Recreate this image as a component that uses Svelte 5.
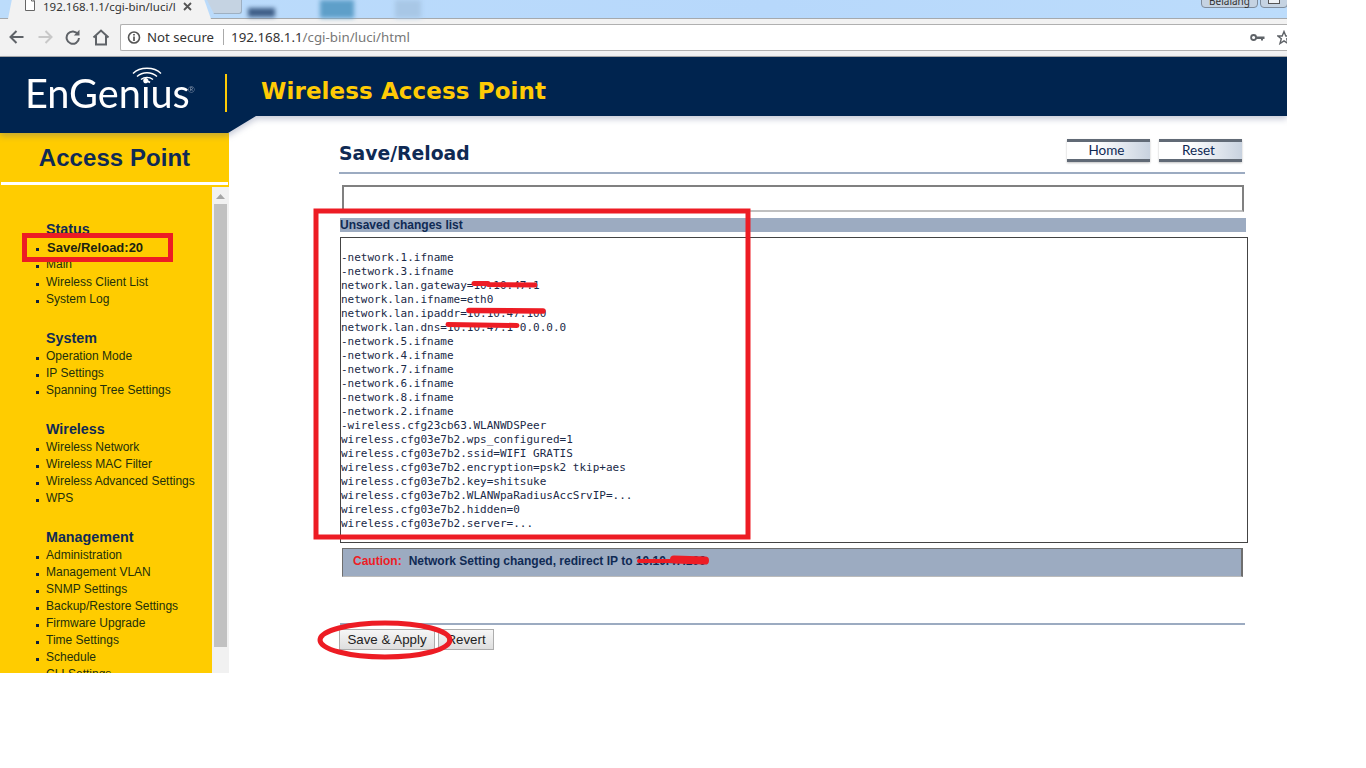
<script>
  const groups = [
    { title: 'Status', items: ['Save/Reload:20', 'Main', 'Wireless Client List', 'System Log'] },
    { title: 'System', items: ['Operation Mode', 'IP Settings', 'Spanning Tree Settings'] },
    { title: 'Wireless', items: ['Wireless Network', 'Wireless MAC Filter', 'Wireless Advanced Settings', 'WPS'] },
    { title: 'Management', items: ['Administration', 'Management VLAN', 'SNMP Settings', 'Backup/Restore Settings', 'Firmware Upgrade', 'Time Settings', 'Schedule', 'CLI Settings'] }
  ];
  const changes = [
    '-network.1.ifname', '-network.3.ifname', 'network.lan.gateway=10.10.47.1', 'network.lan.ifname=eth0',
    'network.lan.ipaddr=10.10.47.100', 'network.lan.dns=10.10.47.1 0.0.0.0', '-network.5.ifname', '-network.4.ifname',
    '-network.7.ifname', '-network.6.ifname', '-network.8.ifname', '-network.2.ifname', '-wireless.cfg23cb63.WLANWDSPeer',
    'wireless.cfg03e7b2.wps_configured=1', 'wireless.cfg03e7b2.ssid=WIFI GRATIS', 'wireless.cfg03e7b2.encryption=psk2 tkip+aes',
    'wireless.cfg03e7b2.key=shitsuke', 'wireless.cfg03e7b2.WLANWpaRadiusAccSrvIP=...', 'wireless.cfg03e7b2.hidden=0', 'wireless.cfg03e7b2.server=...'
  ];
</script>

<div class="page">
  <div class="tabstrip">
    <div class="tab2"></div>
    <div class="tab">
      <svg class="fileicon" width="12" height="14" viewBox="0 0 12 14"><path d="M1.5 0V12.5H10.5V3L7.5 0ZM7.5 0V3H10.5" fill="#fff" stroke="#666" stroke-width="1"/></svg>
      <span class="tabtitle">192.168.1.1/cgi-bin/luci/l</span>
      <svg class="tabclose" width="9" height="9" viewBox="0 0 9 9"><path d="M1 1L8 8M8 1L1 8" stroke="#555" stroke-width="1.8"/></svg>
    </div>
    <div class="blob blob1"></div>
    <div class="blob blob2"></div>
    <div class="blob blob3"></div>
    <div class="winbtn user">Belalang</div>
    <div class="winbtn mini"><i></i></div>
  </div>

  <div class="toolbar">
    <svg class="navicon" width="18" height="16" viewBox="0 0 18 16"><path d="M15.5 8H3M8.5 2L2.5 8L8.5 14" fill="none" stroke="#5f6368" stroke-width="2"/></svg>
    <svg class="navicon" width="18" height="16" viewBox="0 0 18 16"><path d="M2.5 8H15M9.5 2L15.5 8L9.5 14" fill="none" stroke="#c8c8c8" stroke-width="2"/></svg>
    <svg class="navicon" width="18" height="16" viewBox="0 0 18 16"><path d="M14 5.2A6.2 6.2 0 1 0 15 9" fill="none" stroke="#5f6368" stroke-width="2"/><path d="M15.5 0.8V6.6H9.8Z" fill="#5f6368"/></svg>
    <svg class="navicon" width="18" height="17" viewBox="0 0 18 17"><path d="M1.5 8.5L9 1.5L16.5 8.5M4 7V15.5H14V7" fill="none" stroke="#5f6368" stroke-width="2"/></svg>
    <div class="urlbox">
      <svg width="15" height="15" viewBox="0 0 15 15"><circle cx="7" cy="7.5" r="5.5" fill="none" stroke="#555" stroke-width="1.6"/><path d="M7 6.6V11M7 4V5.4" stroke="#555" stroke-width="1.7"/></svg>
      <span class="notsecure">Not secure</span>
      <span class="sep"></span>
      <span class="url">192.168.1.1<span class="urlpath">/cgi-bin/luci/html</span></span>
      <span class="grow"></span>
      <svg class="key" width="15" height="9" viewBox="0 0 15 9"><circle cx="3.6" cy="4.5" r="2.5" fill="none" stroke="#5f6368" stroke-width="1.8"/><path d="M6 3.6H14.5V6H13V7.5H11V6H6Z" fill="#5f6368"/></svg>
      <svg class="star" width="14" height="15" viewBox="0 0 14 15"><path d="M7 1.5L8.8 6H13.2L9.7 8.8L11 13.5L7 10.8L3 13.5L4.3 8.8L0.8 6H5.2Z" fill="none" stroke="#5f6368" stroke-width="1.4"/></svg>
    </div>
  </div>

  <div class="bannerwrap">
    <header class="banner">
      <div class="logo">
        <svg class="wifi" width="30" height="18" viewBox="0 0 30 18"><g fill="none" stroke="#fff"><path d="M1 6.5C8 -0.5 22 -0.5 29 6.5" stroke-width="1.4"/><path d="M5 9.5C10.5 4.5 19.5 4.5 25 9.5" stroke-width="1.4"/><path d="M9 12.5C12.5 9.6 17.5 9.6 21 12.5" stroke-width="1.4"/></g><path d="M12 15.5C14 14 16 14 18 15.5" fill="none" stroke="#fff" stroke-width="1.6"/></svg>
        <span class="wordmark">EnGenius</span><span class="reg">®</span>
      </div>
      <span class="bannerrule"></span>
      <span class="bannertitle">Wireless Access Point</span>
    </header>
  </div>

  <div class="content">
    <aside class="sidebar">
      <h2 class="sidetitle">Access Point</h2>
      <div class="siderule"></div>
      <div class="sideframe">
        <nav class="menu">
          {#each groups as g}
            <section class="group">
              <h3>{g.title}</h3>
              <ul>
                {#each g.items as item}
                  <li class:active={item.startsWith('Save')}>{item}</li>
                {/each}
              </ul>
            </section>
          {/each}
        </nav>
        <div class="scrollbar">
          <svg class="arrow" width="9" height="5" viewBox="0 0 9 5"><path d="M0 5L4.5 0L9 5Z" fill="#a6a6a6"/></svg>
          <div class="thumb"></div>
        </div>
      </div>
    </aside>

    <main class="main">
      <div class="titlerow">
        <h1>Save/Reload</h1>
        <div class="actions">
          <button class="nav">Home</button>
          <button class="nav">Reset</button>
        </div>
      </div>
      <div class="emptybox"></div>
      <div class="listhead">Unsaved changes list</div>
      <div class="listbox">
        {#each changes as line}
          <div class="line">{line}</div>
        {/each}
      </div>
      <div class="caution"><b class="cautionlabel">Caution:</b><b>Network Setting changed, redirect IP to 10.10.47.100</b></div>
      <div class="bottomrule"></div>
      <div class="formbtns">
        <button class="std save">Save &amp; Apply</button>
        <button class="std revert">Revert</button>
      </div>
    </main>
  </div>

  <svg class="marks" width="1287" height="768" viewBox="0 0 1287 768">
    <g fill="none" stroke="#ed1c24">
      <rect x="316" y="211" width="432" height="326" stroke-width="5"/>
      <rect x="24.500" y="235.500" width="146" height="24" stroke-width="5"/>
      <ellipse cx="385" cy="640" rx="65" ry="17" stroke-width="5"/>
      <g stroke-linecap="round">
        <path d="M474 283.500L488 283.500M488 284.500L535 285" stroke-width="5"/>
        <path d="M469 310.500L543 311" stroke-width="5.500"/>
        <path d="M448 324.500L517 325.500" stroke-width="5"/>
        <path d="M639 561L672 561" stroke-width="4"/>
        <path d="M674 559.500L705 560.500" stroke-width="8"/>
      </g>
    </g>
  </svg>
</div>

<style>
  :global(body) { margin: 0; background: #fff; overflow: hidden; }
  .page { position: relative; width: 1287px; height: 768px; overflow: hidden; font-family: "Liberation Sans", Arial, sans-serif; }
  .tabstrip { position: relative; height: 19px; background: linear-gradient(90deg, #bcdcfb, #b7d8fb 60%, #bcdcfb); border-bottom: 1px solid #a5a9ad; box-sizing: border-box; }
  .tab { position: absolute; left: 8px; top: -1px; width: 203px; height: 20px; background: #f2f2f2; clip-path: polygon(4px 0, 196px 0, 100% 100%, 0 100%); display: flex; align-items: center; box-sizing: border-box; padding: 0 0 6px 16px; }
  .fileicon { margin-top: -2px; }
  .tabtitle { margin-left: 7px; width: 133px; overflow: hidden; white-space: nowrap; font: 11.500px "Noto Sans", sans-serif; color: #333; }
  .tabclose { margin-left: 7px; }
  .tab2 { position: absolute; left: 206px; top: -2px; width: 36px; height: 16px; background: #c5d3e2; border: 1px solid #9eb0c2; border-top: 0; box-sizing: border-box; clip-path: polygon(0 0, 100% 0, 100% 100%, 8px 100%); border-radius: 0 0 3px 3px; }
  .blob { position: absolute; filter: blur(2px); }
  .blob1 { left: 248px; width: 27px; background: #3f5f88; top: 8px; height: 9px; }
  .blob2 { left: 320px; width: 34px; background: #5e9fc9; top: 0; height: 18px; }
  .blob3 { left: 395px; width: 26px; background: #a8c7e6; top: 0; height: 18px; }
  .winbtn { position: absolute; top: -5px; height: 13px; box-sizing: border-box; border: 1px solid #7e8c9c; border-radius: 4px; background: #c5d3e2; font: 10px "Noto Sans", sans-serif; color: #333; text-align: center; line-height: 11px; }
  .user { left: 1201px; width: 57px; }
  .mini { left: 1260px; width: 28px; }
  .mini i { display: block; width: 12px; height: 8px; margin: 0 auto; background: #eef2f6; border: 1px solid #555; box-sizing: border-box; }
  .toolbar { display: flex; align-items: center; height: 38px; box-sizing: border-box; background: #f2f2f2; border-bottom: 1px solid #a8a8a8; padding: 0 0 1px 8px; gap: 10px; }
  .navicon { flex: none; }
  .urlbox { flex: 1; display: flex; align-items: center; height: 27px; box-sizing: border-box; background: #fff; border: 1px solid #b0b0b0; border-right: 0; border-radius: 2px 0 0 2px; padding-left: 6px; }
  .notsecure { margin-left: 5px; font: 13.200px "Noto Sans", sans-serif; color: #333; }
  .sep { width: 1px; height: 16px; background: #aaa; margin: 0 7px 0 9px; }
  .url { font: 13.300px "Noto Sans", sans-serif; color: #333; }
  .urlpath { color: #777; }
  .grow { flex: 1; }
  .key { margin-right: 12px; }
  .star { margin-right: -4px; }
  .bannerwrap { filter: drop-shadow(0 3px 3px rgba(90, 100, 140, .35)); }
  .banner { height: 76px; background: #00244f; display: flex; align-items: flex-start; clip-path: polygon(0 0, 100% 0, 100% 59px, 256px 59px, 228px 76px, 0 76px); }
  .logo { position: relative; width: 225px; height: 59px; flex: none; }
  .wifi { position: absolute; left: 132px; top: 10px; }
  .wordmark { position: absolute; left: 25px; top: 13px; font: 400 39.700px/46px Lato, sans-serif; color: #fff; }
  .reg { position: absolute; left: 188px; top: 28px; font: 9px "Liberation Sans", sans-serif; color: #8c9bb0; }
  .bannerrule { width: 2px; height: 38px; margin-top: 17px; background: #ffcb05; flex: none; }
  .bannertitle { margin: 18px 0 0 34px; font: bold 23px/32px "DejaVu Sans", Verdana, sans-serif; letter-spacing: .1px; color: #ffcb05; white-space: nowrap; }
  .content { display: flex; height: 540px; }
  .sidebar { width: 229px; flex: none; background: #ffcc00; display: flex; flex-direction: column; height: 540px; }
  .sidetitle { margin: 0; height: 49px; text-align: center; font: bold 24px/49px "Liberation Sans", Arial, sans-serif; color: #0f2a54; letter-spacing: .05px; }
  .siderule { height: 3px; margin: 0 1px; background: #fff; flex: none; }
  .sideframe { flex: 1; min-height: 0; display: flex; overflow: hidden; }
  .menu { width: 212px; flex: none; padding-top: 35px; box-sizing: border-box; }
  .group { margin-bottom: 21px; }
  .group h3 { margin: 0 0 0 46px; font: bold 14.300px/19px "Liberation Sans", Arial, sans-serif; color: #0f2a54; }
  .group ul { list-style: none; margin: 0; padding: 0; }
  .group li { position: relative; padding-left: 46px; font-size: 12px; line-height: 17px; color: #22300c; white-space: nowrap; }
  .group li::before { content: ""; position: absolute; left: 36px; top: 9px; width: 3px; height: 3px; background: #10203c; }
  .group li.active { font-weight: bold; font-size: 13px; color: #1c2410; padding-left: 47px; }
  .group li.active + li { padding-bottom: 1px; }
  .scrollbar { flex: 1; margin-top: 2px; background: #f1f1f1; display: flex; flex-direction: column; align-items: center; }
  .arrow { margin-top: 7px; }
  .thumb { width: 13px; height: 443px; margin-top: 5px; background: #c1c1c1; flex: none; }
  .main { width: 909px; margin-left: 110px; padding-top: 6px; box-sizing: border-box; }
  .titlerow { width: 906px; height: 33px; display: flex; justify-content: space-between; border-bottom: 2px solid #9cabc1; }
  h1 { margin: 0; font: bold 18.800px/30px "DejaVu Sans", Verdana, sans-serif; color: #0f2a54; }
  .actions { display: flex; gap: 9px; margin-right: 3px; }
  .nav { width: 83px; height: 23px; padding: 0 4px 2px 0; border: 0; border-top: 3px solid #616a76; border-bottom: 3px solid #616a76; background: linear-gradient(90deg, #fff 35%, #c8d2df); box-shadow: 0 1px 2px rgba(0, 0, 0, .25); font: 13.500px Lato, sans-serif; color: #0f2a54; }
  .emptybox { width: 902px; height: 27px; margin: 11px 0 0 3px; box-sizing: border-box; border: 2px solid #808080; border-bottom-color: #c0c0c0; background: #fff; }
  .listhead { width: 906px; height: 14px; margin: 6px 0 0 1px; background: #9cabc1; font: bold 12px/14px "Liberation Sans", Arial, sans-serif; color: #0f2a54; }
  .listbox { width: 908px; height: 306px; margin: 5px 0 0 1px; box-sizing: border-box; border: 1px solid #444; padding-top: 13px; }
  .line { font: 11px/14px "DejaVu Sans Mono", monospace; color: #1a2a48; white-space: nowrap; }
  .caution { display: flex; align-items: center; gap: 7px; width: 901px; height: 29px; margin: 5px 0 0 3px; padding: 0 0 3px 10px; box-sizing: border-box; background: #9cabc1; border: 1px solid #6e6e6e; border-right-width: 2px; border-bottom-color: #bbb; font: 12px "Liberation Sans", Arial, sans-serif; color: #0f2a54; }
  .cautionlabel { color: #ed1c24; }
  .bottomrule { width: 905px; height: 2px; margin: 46px 0 0 1px; background: #9cabc1; }
  .formbtns { display: flex; gap: 3px; margin-top: 4px; }
  .std { height: 21px; padding: 0; border: 1px solid #adadad; background: linear-gradient(#f6f6f6, #dedede); font: 13.300px "Liberation Sans", Arial, sans-serif; color: #222; }
  .save { width: 96px; }
  .revert { width: 56px; }
  .marks { position: absolute; left: 0; top: 0; pointer-events: none; }
</style>
